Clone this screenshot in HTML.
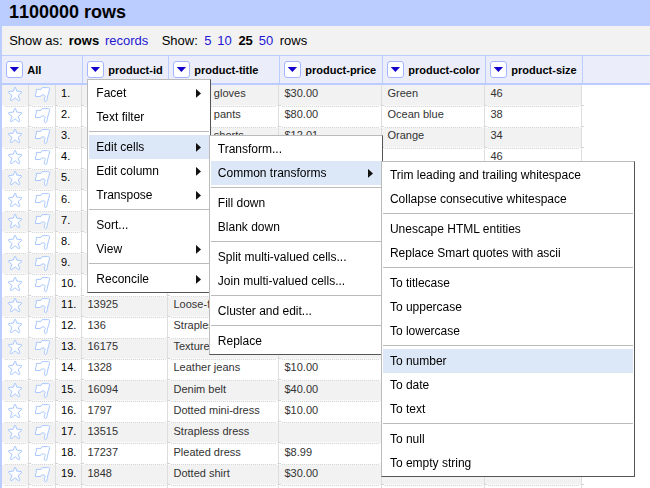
<!DOCTYPE html>
<html><head><meta charset="utf-8"><title>OpenRefine</title>
<style>
html,body{margin:0;padding:0}
body{width:650px;height:488px;overflow:hidden;background:#fff;position:relative;font-family:"Liberation Sans",Arial,sans-serif;color:#000}
.abs{position:absolute}
.t{position:absolute;white-space:nowrap;line-height:1}
.ic{position:absolute;overflow:visible}
a{color:#2416d2;text-decoration:none}
#top{left:0;top:0;width:650px;height:26px;background:#bbccff}
#bar{left:2px;top:26px;width:648px;height:29px;background:#f2f2f2}
#strip{left:0;top:0;width:2px;height:488px;background:#bbccff}
#hdr{left:2px;top:55px;width:648px;height:28px;background:#ebeefa;border-top:1px solid #bbccff;box-sizing:border-box}
#hdrb{left:2px;top:83px;width:648px;height:2px;background:#bbccff}
.hs{position:absolute;top:56px;width:1px;height:27px;background:#bbccff}
.btn{position:absolute;top:61px;width:17px;height:17px;box-sizing:border-box;background:#fff;border:1px solid #a4b5ff;border-radius:3px}
.btn:after{content:"";position:absolute;left:2.7px;top:4.9px;width:9.4px;height:5.2px;background:#1400cc;clip-path:polygon(0 0,100% 0,50% 100%)}
.hl{font-size:11px;font-weight:bold;top:65px}
.row{position:absolute;left:2px;width:580px}
.odd{background:#f2f2f2;box-shadow:0 1px 0 #f8f8f8}
.dot{position:absolute;left:2px;width:580px;height:0;border-top:1px dotted #d2d2d2}
.vs{position:absolute;top:85px;width:1px;height:403px;background:#ddd}
.c{font-size:11px;color:#333}
.n{font-size:11px;color:#000;font-kerning:none}
.menu{position:absolute;background:#fff;box-sizing:border-box;border:1px solid #bbb;border-right:1px solid #555;border-bottom:1px solid #555;font-size:12px;padding:1px 0;will-change:transform}
.mi{position:relative;height:24px;line-height:24px;padding-left:5.5px;white-space:nowrap;margin:0 1px}
.mi.sel{background:#dce7f7}
.mi.sub:after{content:"";position:absolute;right:8px;top:7.8px;width:5.2px;height:9.2px;background:#111;clip-path:polygon(0 0,100% 50%,0 100%)}
.ms{height:1px;background:#bbb;margin:2px 1px 3px 1px}
</style></head><body>
<div id="top" class="abs"></div>
<div id="bar" class="abs"></div>
<div id="hdr" class="abs"></div>
<div id="hdrb" class="abs"></div>
<div class="t" style="left:9px;top:3px;font-size:18px;font-weight:bold;font-kerning:none">1100000 rows</div>
<span class="t" style="left:9.2px;top:34px;font-size:13px">Show as:</span><span class="t" style="left:68.8px;top:34px;font-size:13px;font-weight:bold">rows</span><a class="t" style="left:105px;top:34px;font-size:13px">records</a><span class="t" style="left:161.7px;top:34px;font-size:13px">Show:</span><a class="t" style="left:204.3px;top:34px;font-size:13px">5</a><a class="t" style="left:217.2px;top:34px;font-size:13px">10</a><span class="t" style="left:238.4px;top:34px;font-size:13px;font-weight:bold">25</span><a class="t" style="left:258.7px;top:34px;font-size:13px">50</a><span class="t" style="left:279.7px;top:34px;font-size:13px">rows</span>
<div class="row odd" style="top:85px;height:20px"></div><div class="row odd" style="top:128px;height:19px"></div><div class="row odd" style="top:170px;height:19px"></div><div class="row odd" style="top:212px;height:19px"></div><div class="row odd" style="top:254px;height:19px"></div><div class="row odd" style="top:297px;height:19px"></div><div class="row odd" style="top:339px;height:19px"></div><div class="row odd" style="top:381px;height:19px"></div><div class="row odd" style="top:423px;height:19px"></div><div class="row odd" style="top:465px;height:19px"></div>
<svg class="ic" style="left:0;top:0" width="650" height="488"><path d="M4.8 106.5H26.5M31.8 106.5H53.5M58.8 106.5H79.5M84.8 106.5H165.5M170.8 106.5H276.5M281.8 106.5H379.5M384.8 106.5H482.5M487.8 106.5H579.5M4.8 127.5H26.5M31.8 127.5H53.5M58.8 127.5H79.5M84.8 127.5H165.5M170.8 127.5H276.5M281.8 127.5H379.5M384.8 127.5H482.5M487.8 127.5H579.5M4.8 148.5H26.5M31.8 148.5H53.5M58.8 148.5H79.5M84.8 148.5H165.5M170.8 148.5H276.5M281.8 148.5H379.5M384.8 148.5H482.5M487.8 148.5H579.5M4.8 169.5H26.5M31.8 169.5H53.5M58.8 169.5H79.5M84.8 169.5H165.5M170.8 169.5H276.5M281.8 169.5H379.5M384.8 169.5H482.5M487.8 169.5H579.5M4.8 190.5H26.5M31.8 190.5H53.5M58.8 190.5H79.5M84.8 190.5H165.5M170.8 190.5H276.5M281.8 190.5H379.5M384.8 190.5H482.5M487.8 190.5H579.5M4.8 211.5H26.5M31.8 211.5H53.5M58.8 211.5H79.5M84.8 211.5H165.5M170.8 211.5H276.5M281.8 211.5H379.5M384.8 211.5H482.5M487.8 211.5H579.5M4.8 232.5H26.5M31.8 232.5H53.5M58.8 232.5H79.5M84.8 232.5H165.5M170.8 232.5H276.5M281.8 232.5H379.5M384.8 232.5H482.5M487.8 232.5H579.5M4.8 253.5H26.5M31.8 253.5H53.5M58.8 253.5H79.5M84.8 253.5H165.5M170.8 253.5H276.5M281.8 253.5H379.5M384.8 253.5H482.5M487.8 253.5H579.5M4.8 274.5H26.5M31.8 274.5H53.5M58.8 274.5H79.5M84.8 274.5H165.5M170.8 274.5H276.5M281.8 274.5H379.5M384.8 274.5H482.5M487.8 274.5H579.5M4.8 296.5H26.5M31.8 296.5H53.5M58.8 296.5H79.5M84.8 296.5H165.5M170.8 296.5H276.5M281.8 296.5H379.5M384.8 296.5H482.5M487.8 296.5H579.5M4.8 317.5H26.5M31.8 317.5H53.5M58.8 317.5H79.5M84.8 317.5H165.5M170.8 317.5H276.5M281.8 317.5H379.5M384.8 317.5H482.5M487.8 317.5H579.5M4.8 338.5H26.5M31.8 338.5H53.5M58.8 338.5H79.5M84.8 338.5H165.5M170.8 338.5H276.5M281.8 338.5H379.5M384.8 338.5H482.5M487.8 338.5H579.5M4.8 359.5H26.5M31.8 359.5H53.5M58.8 359.5H79.5M84.8 359.5H165.5M170.8 359.5H276.5M281.8 359.5H379.5M384.8 359.5H482.5M487.8 359.5H579.5M4.8 380.5H26.5M31.8 380.5H53.5M58.8 380.5H79.5M84.8 380.5H165.5M170.8 380.5H276.5M281.8 380.5H379.5M384.8 380.5H482.5M487.8 380.5H579.5M4.8 401.5H26.5M31.8 401.5H53.5M58.8 401.5H79.5M84.8 401.5H165.5M170.8 401.5H276.5M281.8 401.5H379.5M384.8 401.5H482.5M487.8 401.5H579.5M4.8 422.5H26.5M31.8 422.5H53.5M58.8 422.5H79.5M84.8 422.5H165.5M170.8 422.5H276.5M281.8 422.5H379.5M384.8 422.5H482.5M487.8 422.5H579.5M4.8 443.5H26.5M31.8 443.5H53.5M58.8 443.5H79.5M84.8 443.5H165.5M170.8 443.5H276.5M281.8 443.5H379.5M384.8 443.5H482.5M487.8 443.5H579.5M4.8 464.5H26.5M31.8 464.5H53.5M58.8 464.5H79.5M84.8 464.5H165.5M170.8 464.5H276.5M281.8 464.5H379.5M384.8 464.5H482.5M487.8 464.5H579.5M4.8 485.5H26.5M31.8 485.5H53.5M58.8 485.5H79.5M84.8 485.5H165.5M170.8 485.5H276.5M281.8 485.5H379.5M384.8 485.5H482.5M487.8 485.5H579.5" stroke="#cecece" stroke-dasharray="1 1" fill="none"/><path d="M29 105.5h2M56 105.5h2M82 105.5h2M168 105.5h2M279 105.5h2M382 105.5h2M485 105.5h2M582 105.5h2M29 126.5h2M56 126.5h2M82 126.5h2M168 126.5h2M279 126.5h2M382 126.5h2M485 126.5h2M582 126.5h2M29 147.5h2M56 147.5h2M82 147.5h2M168 147.5h2M279 147.5h2M382 147.5h2M485 147.5h2M582 147.5h2M29 168.5h2M56 168.5h2M82 168.5h2M168 168.5h2M279 168.5h2M382 168.5h2M485 168.5h2M582 168.5h2M29 189.5h2M56 189.5h2M82 189.5h2M168 189.5h2M279 189.5h2M382 189.5h2M485 189.5h2M582 189.5h2M29 210.5h2M56 210.5h2M82 210.5h2M168 210.5h2M279 210.5h2M382 210.5h2M485 210.5h2M582 210.5h2M29 231.5h2M56 231.5h2M82 231.5h2M168 231.5h2M279 231.5h2M382 231.5h2M485 231.5h2M582 231.5h2M29 252.5h2M56 252.5h2M82 252.5h2M168 252.5h2M279 252.5h2M382 252.5h2M485 252.5h2M582 252.5h2M29 273.5h2M56 273.5h2M82 273.5h2M168 273.5h2M279 273.5h2M382 273.5h2M485 273.5h2M582 273.5h2M29 295.5h2M56 295.5h2M82 295.5h2M168 295.5h2M279 295.5h2M382 295.5h2M485 295.5h2M582 295.5h2M29 316.5h2M56 316.5h2M82 316.5h2M168 316.5h2M279 316.5h2M382 316.5h2M485 316.5h2M582 316.5h2M29 337.5h2M56 337.5h2M82 337.5h2M168 337.5h2M279 337.5h2M382 337.5h2M485 337.5h2M582 337.5h2M29 358.5h2M56 358.5h2M82 358.5h2M168 358.5h2M279 358.5h2M382 358.5h2M485 358.5h2M582 358.5h2M29 379.5h2M56 379.5h2M82 379.5h2M168 379.5h2M279 379.5h2M382 379.5h2M485 379.5h2M582 379.5h2M29 400.5h2M56 400.5h2M82 400.5h2M168 400.5h2M279 400.5h2M382 400.5h2M485 400.5h2M582 400.5h2M29 421.5h2M56 421.5h2M82 421.5h2M168 421.5h2M279 421.5h2M382 421.5h2M485 421.5h2M582 421.5h2M29 442.5h2M56 442.5h2M82 442.5h2M168 442.5h2M279 442.5h2M382 442.5h2M485 442.5h2M582 442.5h2M29 463.5h2M56 463.5h2M82 463.5h2M168 463.5h2M279 463.5h2M382 463.5h2M485 463.5h2M582 463.5h2M29 484.5h2M56 484.5h2M82 484.5h2M168 484.5h2M279 484.5h2M382 484.5h2M485 484.5h2M582 484.5h2" stroke="#d4d4d4" fill="none"/><path d="M27 105.5h1M54 105.5h1M80 105.5h1M166 105.5h1M277 105.5h1M380 105.5h1M483 105.5h1M580 105.5h1M27 126.5h1M54 126.5h1M80 126.5h1M166 126.5h1M277 126.5h1M380 126.5h1M483 126.5h1M580 126.5h1M27 147.5h1M54 147.5h1M80 147.5h1M166 147.5h1M277 147.5h1M380 147.5h1M483 147.5h1M580 147.5h1M27 168.5h1M54 168.5h1M80 168.5h1M166 168.5h1M277 168.5h1M380 168.5h1M483 168.5h1M580 168.5h1M27 189.5h1M54 189.5h1M80 189.5h1M166 189.5h1M277 189.5h1M380 189.5h1M483 189.5h1M580 189.5h1M27 210.5h1M54 210.5h1M80 210.5h1M166 210.5h1M277 210.5h1M380 210.5h1M483 210.5h1M580 210.5h1M27 231.5h1M54 231.5h1M80 231.5h1M166 231.5h1M277 231.5h1M380 231.5h1M483 231.5h1M580 231.5h1M27 252.5h1M54 252.5h1M80 252.5h1M166 252.5h1M277 252.5h1M380 252.5h1M483 252.5h1M580 252.5h1M27 273.5h1M54 273.5h1M80 273.5h1M166 273.5h1M277 273.5h1M380 273.5h1M483 273.5h1M580 273.5h1M27 295.5h1M54 295.5h1M80 295.5h1M166 295.5h1M277 295.5h1M380 295.5h1M483 295.5h1M580 295.5h1M27 316.5h1M54 316.5h1M80 316.5h1M166 316.5h1M277 316.5h1M380 316.5h1M483 316.5h1M580 316.5h1M27 337.5h1M54 337.5h1M80 337.5h1M166 337.5h1M277 337.5h1M380 337.5h1M483 337.5h1M580 337.5h1M27 358.5h1M54 358.5h1M80 358.5h1M166 358.5h1M277 358.5h1M380 358.5h1M483 358.5h1M580 358.5h1M27 379.5h1M54 379.5h1M80 379.5h1M166 379.5h1M277 379.5h1M380 379.5h1M483 379.5h1M580 379.5h1M27 400.5h1M54 400.5h1M80 400.5h1M166 400.5h1M277 400.5h1M380 400.5h1M483 400.5h1M580 400.5h1M27 421.5h1M54 421.5h1M80 421.5h1M166 421.5h1M277 421.5h1M380 421.5h1M483 421.5h1M580 421.5h1M27 442.5h1M54 442.5h1M80 442.5h1M166 442.5h1M277 442.5h1M380 442.5h1M483 442.5h1M580 442.5h1M27 463.5h1M54 463.5h1M80 463.5h1M166 463.5h1M277 463.5h1M380 463.5h1M483 463.5h1M580 463.5h1M27 484.5h1M54 484.5h1M80 484.5h1M166 484.5h1M277 484.5h1M380 484.5h1M483 484.5h1M580 484.5h1" stroke="#e8e8e8" fill="none"/></svg>
<div class="vs" style="left:28px"></div><div class="vs" style="left:55px"></div><div class="vs" style="left:81px"></div><div class="vs" style="left:167px"></div><div class="vs" style="left:278px"></div><div class="vs" style="left:381px"></div><div class="vs" style="left:484px"></div><div class="vs" style="left:581px"></div>
<svg class="ic" style="left:7px;top:86px" width="16" height="16" viewBox="0 0 16 16"><path d="M7.5 1.5 H8.6 L9.7 5.1 L14.3 5.5 L14.9 6.3 L11.1 9.5 L12.8 13.8 L12.2 14.7 L11.1 14.3 L8.05 11.8 L5 14.3 L3.9 14.7 L3.3 13.8 L5 9.5 L1.2 6.3 L1.8 5.5 L6.4 5.1 Z" fill="#fff" stroke="#a8c8ff" stroke-width="1" stroke-linejoin="round"/></svg><svg class="ic" style="left:34px;top:86px" width="18" height="17" viewBox="0 0 18 17"><path d="M2.3 3.4 H7 L8.2 1.6 H13.4 C14.8 1.4 15.9 2 15.7 2.8 C15 5 14.6 7.5 13.7 10.1 C13.4 11.8 13.1 13.6 12.6 14.9 C12.2 15.8 10.9 15.8 10.6 15 C10.2 14 10.3 12.4 10.9 11.3 C11.6 10.3 10.9 9.2 9.7 8.8 L7.2 9.3 L6.5 10.5 H1.5 V7.9 L2.3 6.8 Z" fill="#fff" stroke="#a8c8ff" stroke-width="1" stroke-linejoin="round"/></svg><span class="t n" style="left:61.1px;top:88px">1.</span><span class="t c" style="left:87.5px;top:88px">1004</span><span class="t c" style="left:173.5px;top:88px">Leather gloves</span><span class="t c" style="left:284.5px;top:88px">$30.00</span><span class="t c" style="left:387.5px;top:88px">Green</span><span class="t c" style="left:490.5px;top:88px">46</span>
<svg class="ic" style="left:7px;top:107px" width="16" height="16" viewBox="0 0 16 16"><path d="M7.5 1.5 H8.6 L9.7 5.1 L14.3 5.5 L14.9 6.3 L11.1 9.5 L12.8 13.8 L12.2 14.7 L11.1 14.3 L8.05 11.8 L5 14.3 L3.9 14.7 L3.3 13.8 L5 9.5 L1.2 6.3 L1.8 5.5 L6.4 5.1 Z" fill="#fff" stroke="#a8c8ff" stroke-width="1" stroke-linejoin="round"/></svg><svg class="ic" style="left:34px;top:107px" width="18" height="17" viewBox="0 0 18 17"><path d="M2.3 3.4 H7 L8.2 1.6 H13.4 C14.8 1.4 15.9 2 15.7 2.8 C15 5 14.6 7.5 13.7 10.1 C13.4 11.8 13.1 13.6 12.6 14.9 C12.2 15.8 10.9 15.8 10.6 15 C10.2 14 10.3 12.4 10.9 11.3 C11.6 10.3 10.9 9.2 9.7 8.8 L7.2 9.3 L6.5 10.5 H1.5 V7.9 L2.3 6.8 Z" fill="#fff" stroke="#a8c8ff" stroke-width="1" stroke-linejoin="round"/></svg><span class="t n" style="left:61.1px;top:109px">2.</span><span class="t c" style="left:87.5px;top:109px">1010</span><span class="t c" style="left:173.5px;top:109px">Leather pants</span><span class="t c" style="left:284.5px;top:109px">$80.00</span><span class="t c" style="left:387.5px;top:109px">Ocean blue</span><span class="t c" style="left:490.5px;top:109px">38</span>
<svg class="ic" style="left:7px;top:128px" width="16" height="16" viewBox="0 0 16 16"><path d="M7.5 1.5 H8.6 L9.7 5.1 L14.3 5.5 L14.9 6.3 L11.1 9.5 L12.8 13.8 L12.2 14.7 L11.1 14.3 L8.05 11.8 L5 14.3 L3.9 14.7 L3.3 13.8 L5 9.5 L1.2 6.3 L1.8 5.5 L6.4 5.1 Z" fill="#fff" stroke="#a8c8ff" stroke-width="1" stroke-linejoin="round"/></svg><svg class="ic" style="left:34px;top:128px" width="18" height="17" viewBox="0 0 18 17"><path d="M2.3 3.4 H7 L8.2 1.6 H13.4 C14.8 1.4 15.9 2 15.7 2.8 C15 5 14.6 7.5 13.7 10.1 C13.4 11.8 13.1 13.6 12.6 14.9 C12.2 15.8 10.9 15.8 10.6 15 C10.2 14 10.3 12.4 10.9 11.3 C11.6 10.3 10.9 9.2 9.7 8.8 L7.2 9.3 L6.5 10.5 H1.5 V7.9 L2.3 6.8 Z" fill="#fff" stroke="#a8c8ff" stroke-width="1" stroke-linejoin="round"/></svg><span class="t n" style="left:61.1px;top:130px">3.</span><span class="t c" style="left:87.5px;top:130px">1027</span><span class="t c" style="left:173.5px;top:130px">Leather shorts</span><span class="t c" style="left:284.5px;top:130px">$12.01</span><span class="t c" style="left:387.5px;top:130px">Orange</span><span class="t c" style="left:490.5px;top:130px">34</span>
<svg class="ic" style="left:7px;top:149px" width="16" height="16" viewBox="0 0 16 16"><path d="M7.5 1.5 H8.6 L9.7 5.1 L14.3 5.5 L14.9 6.3 L11.1 9.5 L12.8 13.8 L12.2 14.7 L11.1 14.3 L8.05 11.8 L5 14.3 L3.9 14.7 L3.3 13.8 L5 9.5 L1.2 6.3 L1.8 5.5 L6.4 5.1 Z" fill="#fff" stroke="#a8c8ff" stroke-width="1" stroke-linejoin="round"/></svg><svg class="ic" style="left:34px;top:149px" width="18" height="17" viewBox="0 0 18 17"><path d="M2.3 3.4 H7 L8.2 1.6 H13.4 C14.8 1.4 15.9 2 15.7 2.8 C15 5 14.6 7.5 13.7 10.1 C13.4 11.8 13.1 13.6 12.6 14.9 C12.2 15.8 10.9 15.8 10.6 15 C10.2 14 10.3 12.4 10.9 11.3 C11.6 10.3 10.9 9.2 9.7 8.8 L7.2 9.3 L6.5 10.5 H1.5 V7.9 L2.3 6.8 Z" fill="#fff" stroke="#a8c8ff" stroke-width="1" stroke-linejoin="round"/></svg><span class="t n" style="left:61.1px;top:151px">4.</span><span class="t c" style="left:87.5px;top:151px">1033</span><span class="t c" style="left:173.5px;top:151px">Leather skirt</span><span class="t c" style="left:284.5px;top:151px">$20.00</span><span class="t c" style="left:490.5px;top:151px">46</span>
<svg class="ic" style="left:7px;top:170px" width="16" height="16" viewBox="0 0 16 16"><path d="M7.5 1.5 H8.6 L9.7 5.1 L14.3 5.5 L14.9 6.3 L11.1 9.5 L12.8 13.8 L12.2 14.7 L11.1 14.3 L8.05 11.8 L5 14.3 L3.9 14.7 L3.3 13.8 L5 9.5 L1.2 6.3 L1.8 5.5 L6.4 5.1 Z" fill="#fff" stroke="#a8c8ff" stroke-width="1" stroke-linejoin="round"/></svg><svg class="ic" style="left:34px;top:170px" width="18" height="17" viewBox="0 0 18 17"><path d="M2.3 3.4 H7 L8.2 1.6 H13.4 C14.8 1.4 15.9 2 15.7 2.8 C15 5 14.6 7.5 13.7 10.1 C13.4 11.8 13.1 13.6 12.6 14.9 C12.2 15.8 10.9 15.8 10.6 15 C10.2 14 10.3 12.4 10.9 11.3 C11.6 10.3 10.9 9.2 9.7 8.8 L7.2 9.3 L6.5 10.5 H1.5 V7.9 L2.3 6.8 Z" fill="#fff" stroke="#a8c8ff" stroke-width="1" stroke-linejoin="round"/></svg><span class="t n" style="left:61.1px;top:172px">5.</span><span class="t c" style="left:87.5px;top:172px">1044</span><span class="t c" style="left:173.5px;top:172px">Cotton shirt</span><span class="t c" style="left:284.5px;top:172px">$15.00</span><span class="t c" style="left:387.5px;top:172px">Red</span><span class="t c" style="left:490.5px;top:172px">40</span>
<svg class="ic" style="left:7px;top:192px" width="16" height="16" viewBox="0 0 16 16"><path d="M7.5 1.5 H8.6 L9.7 5.1 L14.3 5.5 L14.9 6.3 L11.1 9.5 L12.8 13.8 L12.2 14.7 L11.1 14.3 L8.05 11.8 L5 14.3 L3.9 14.7 L3.3 13.8 L5 9.5 L1.2 6.3 L1.8 5.5 L6.4 5.1 Z" fill="#fff" stroke="#a8c8ff" stroke-width="1" stroke-linejoin="round"/></svg><svg class="ic" style="left:34px;top:192px" width="18" height="17" viewBox="0 0 18 17"><path d="M2.3 3.4 H7 L8.2 1.6 H13.4 C14.8 1.4 15.9 2 15.7 2.8 C15 5 14.6 7.5 13.7 10.1 C13.4 11.8 13.1 13.6 12.6 14.9 C12.2 15.8 10.9 15.8 10.6 15 C10.2 14 10.3 12.4 10.9 11.3 C11.6 10.3 10.9 9.2 9.7 8.8 L7.2 9.3 L6.5 10.5 H1.5 V7.9 L2.3 6.8 Z" fill="#fff" stroke="#a8c8ff" stroke-width="1" stroke-linejoin="round"/></svg><span class="t n" style="left:61.1px;top:194px">6.</span><span class="t c" style="left:87.5px;top:194px">1052</span><span class="t c" style="left:173.5px;top:194px">Cotton dress</span><span class="t c" style="left:284.5px;top:194px">$25.00</span><span class="t c" style="left:387.5px;top:194px">Blue</span><span class="t c" style="left:490.5px;top:194px">36</span>
<svg class="ic" style="left:7px;top:213px" width="16" height="16" viewBox="0 0 16 16"><path d="M7.5 1.5 H8.6 L9.7 5.1 L14.3 5.5 L14.9 6.3 L11.1 9.5 L12.8 13.8 L12.2 14.7 L11.1 14.3 L8.05 11.8 L5 14.3 L3.9 14.7 L3.3 13.8 L5 9.5 L1.2 6.3 L1.8 5.5 L6.4 5.1 Z" fill="#fff" stroke="#a8c8ff" stroke-width="1" stroke-linejoin="round"/></svg><svg class="ic" style="left:34px;top:213px" width="18" height="17" viewBox="0 0 18 17"><path d="M2.3 3.4 H7 L8.2 1.6 H13.4 C14.8 1.4 15.9 2 15.7 2.8 C15 5 14.6 7.5 13.7 10.1 C13.4 11.8 13.1 13.6 12.6 14.9 C12.2 15.8 10.9 15.8 10.6 15 C10.2 14 10.3 12.4 10.9 11.3 C11.6 10.3 10.9 9.2 9.7 8.8 L7.2 9.3 L6.5 10.5 H1.5 V7.9 L2.3 6.8 Z" fill="#fff" stroke="#a8c8ff" stroke-width="1" stroke-linejoin="round"/></svg><span class="t n" style="left:61.1px;top:215px">7.</span><span class="t c" style="left:87.5px;top:215px">1068</span><span class="t c" style="left:173.5px;top:215px">Wool scarf</span><span class="t c" style="left:284.5px;top:215px">$9.00</span><span class="t c" style="left:387.5px;top:215px">Grey</span><span class="t c" style="left:490.5px;top:215px">42</span>
<svg class="ic" style="left:7px;top:234px" width="16" height="16" viewBox="0 0 16 16"><path d="M7.5 1.5 H8.6 L9.7 5.1 L14.3 5.5 L14.9 6.3 L11.1 9.5 L12.8 13.8 L12.2 14.7 L11.1 14.3 L8.05 11.8 L5 14.3 L3.9 14.7 L3.3 13.8 L5 9.5 L1.2 6.3 L1.8 5.5 L6.4 5.1 Z" fill="#fff" stroke="#a8c8ff" stroke-width="1" stroke-linejoin="round"/></svg><svg class="ic" style="left:34px;top:234px" width="18" height="17" viewBox="0 0 18 17"><path d="M2.3 3.4 H7 L8.2 1.6 H13.4 C14.8 1.4 15.9 2 15.7 2.8 C15 5 14.6 7.5 13.7 10.1 C13.4 11.8 13.1 13.6 12.6 14.9 C12.2 15.8 10.9 15.8 10.6 15 C10.2 14 10.3 12.4 10.9 11.3 C11.6 10.3 10.9 9.2 9.7 8.8 L7.2 9.3 L6.5 10.5 H1.5 V7.9 L2.3 6.8 Z" fill="#fff" stroke="#a8c8ff" stroke-width="1" stroke-linejoin="round"/></svg><span class="t n" style="left:61.1px;top:236px">8.</span><span class="t c" style="left:87.5px;top:236px">1071</span><span class="t c" style="left:173.5px;top:236px">Wool hat</span><span class="t c" style="left:284.5px;top:236px">$7.50</span><span class="t c" style="left:387.5px;top:236px">Black</span><span class="t c" style="left:490.5px;top:236px">44</span>
<svg class="ic" style="left:7px;top:255px" width="16" height="16" viewBox="0 0 16 16"><path d="M7.5 1.5 H8.6 L9.7 5.1 L14.3 5.5 L14.9 6.3 L11.1 9.5 L12.8 13.8 L12.2 14.7 L11.1 14.3 L8.05 11.8 L5 14.3 L3.9 14.7 L3.3 13.8 L5 9.5 L1.2 6.3 L1.8 5.5 L6.4 5.1 Z" fill="#fff" stroke="#a8c8ff" stroke-width="1" stroke-linejoin="round"/></svg><svg class="ic" style="left:34px;top:255px" width="18" height="17" viewBox="0 0 18 17"><path d="M2.3 3.4 H7 L8.2 1.6 H13.4 C14.8 1.4 15.9 2 15.7 2.8 C15 5 14.6 7.5 13.7 10.1 C13.4 11.8 13.1 13.6 12.6 14.9 C12.2 15.8 10.9 15.8 10.6 15 C10.2 14 10.3 12.4 10.9 11.3 C11.6 10.3 10.9 9.2 9.7 8.8 L7.2 9.3 L6.5 10.5 H1.5 V7.9 L2.3 6.8 Z" fill="#fff" stroke="#a8c8ff" stroke-width="1" stroke-linejoin="round"/></svg><span class="t n" style="left:61.1px;top:257px">9.</span><span class="t c" style="left:87.5px;top:257px">1085</span><span class="t c" style="left:173.5px;top:257px">Silk blouse</span><span class="t c" style="left:284.5px;top:257px">$45.00</span><span class="t c" style="left:387.5px;top:257px">White</span><span class="t c" style="left:490.5px;top:257px">38</span>
<svg class="ic" style="left:7px;top:276px" width="16" height="16" viewBox="0 0 16 16"><path d="M7.5 1.5 H8.6 L9.7 5.1 L14.3 5.5 L14.9 6.3 L11.1 9.5 L12.8 13.8 L12.2 14.7 L11.1 14.3 L8.05 11.8 L5 14.3 L3.9 14.7 L3.3 13.8 L5 9.5 L1.2 6.3 L1.8 5.5 L6.4 5.1 Z" fill="#fff" stroke="#a8c8ff" stroke-width="1" stroke-linejoin="round"/></svg><svg class="ic" style="left:34px;top:276px" width="18" height="17" viewBox="0 0 18 17"><path d="M2.3 3.4 H7 L8.2 1.6 H13.4 C14.8 1.4 15.9 2 15.7 2.8 C15 5 14.6 7.5 13.7 10.1 C13.4 11.8 13.1 13.6 12.6 14.9 C12.2 15.8 10.9 15.8 10.6 15 C10.2 14 10.3 12.4 10.9 11.3 C11.6 10.3 10.9 9.2 9.7 8.8 L7.2 9.3 L6.5 10.5 H1.5 V7.9 L2.3 6.8 Z" fill="#fff" stroke="#a8c8ff" stroke-width="1" stroke-linejoin="round"/></svg><span class="t n" style="left:61.1px;top:278px">10.</span><span class="t c" style="left:87.5px;top:278px">1093</span><span class="t c" style="left:173.5px;top:278px">Silk tie</span><span class="t c" style="left:284.5px;top:278px">$18.00</span><span class="t c" style="left:387.5px;top:278px">Navy</span><span class="t c" style="left:490.5px;top:278px">40</span>
<svg class="ic" style="left:7px;top:297px" width="16" height="16" viewBox="0 0 16 16"><path d="M7.5 1.5 H8.6 L9.7 5.1 L14.3 5.5 L14.9 6.3 L11.1 9.5 L12.8 13.8 L12.2 14.7 L11.1 14.3 L8.05 11.8 L5 14.3 L3.9 14.7 L3.3 13.8 L5 9.5 L1.2 6.3 L1.8 5.5 L6.4 5.1 Z" fill="#fff" stroke="#a8c8ff" stroke-width="1" stroke-linejoin="round"/></svg><svg class="ic" style="left:34px;top:297px" width="18" height="17" viewBox="0 0 18 17"><path d="M2.3 3.4 H7 L8.2 1.6 H13.4 C14.8 1.4 15.9 2 15.7 2.8 C15 5 14.6 7.5 13.7 10.1 C13.4 11.8 13.1 13.6 12.6 14.9 C12.2 15.8 10.9 15.8 10.6 15 C10.2 14 10.3 12.4 10.9 11.3 C11.6 10.3 10.9 9.2 9.7 8.8 L7.2 9.3 L6.5 10.5 H1.5 V7.9 L2.3 6.8 Z" fill="#fff" stroke="#a8c8ff" stroke-width="1" stroke-linejoin="round"/></svg><span class="t n" style="left:61.1px;top:299px">11.</span><span class="t c" style="left:87.5px;top:299px">13925</span><span class="t c" style="left:173.5px;top:299px">Loose-fit pants</span><span class="t c" style="left:284.5px;top:299px">$22.00</span><span class="t c" style="left:387.5px;top:299px">Pink</span><span class="t c" style="left:490.5px;top:299px">36</span>
<svg class="ic" style="left:7px;top:318px" width="16" height="16" viewBox="0 0 16 16"><path d="M7.5 1.5 H8.6 L9.7 5.1 L14.3 5.5 L14.9 6.3 L11.1 9.5 L12.8 13.8 L12.2 14.7 L11.1 14.3 L8.05 11.8 L5 14.3 L3.9 14.7 L3.3 13.8 L5 9.5 L1.2 6.3 L1.8 5.5 L6.4 5.1 Z" fill="#fff" stroke="#a8c8ff" stroke-width="1" stroke-linejoin="round"/></svg><svg class="ic" style="left:34px;top:318px" width="18" height="17" viewBox="0 0 18 17"><path d="M2.3 3.4 H7 L8.2 1.6 H13.4 C14.8 1.4 15.9 2 15.7 2.8 C15 5 14.6 7.5 13.7 10.1 C13.4 11.8 13.1 13.6 12.6 14.9 C12.2 15.8 10.9 15.8 10.6 15 C10.2 14 10.3 12.4 10.9 11.3 C11.6 10.3 10.9 9.2 9.7 8.8 L7.2 9.3 L6.5 10.5 H1.5 V7.9 L2.3 6.8 Z" fill="#fff" stroke="#a8c8ff" stroke-width="1" stroke-linejoin="round"/></svg><span class="t n" style="left:61.1px;top:320px">12.</span><span class="t c" style="left:87.5px;top:320px">136</span><span class="t c" style="left:173.5px;top:320px">Strapless dress</span><span class="t c" style="left:284.5px;top:320px">$35.00</span><span class="t c" style="left:387.5px;top:320px">Yellow</span><span class="t c" style="left:490.5px;top:320px">38</span>
<svg class="ic" style="left:7px;top:339px" width="16" height="16" viewBox="0 0 16 16"><path d="M7.5 1.5 H8.6 L9.7 5.1 L14.3 5.5 L14.9 6.3 L11.1 9.5 L12.8 13.8 L12.2 14.7 L11.1 14.3 L8.05 11.8 L5 14.3 L3.9 14.7 L3.3 13.8 L5 9.5 L1.2 6.3 L1.8 5.5 L6.4 5.1 Z" fill="#fff" stroke="#a8c8ff" stroke-width="1" stroke-linejoin="round"/></svg><svg class="ic" style="left:34px;top:339px" width="18" height="17" viewBox="0 0 18 17"><path d="M2.3 3.4 H7 L8.2 1.6 H13.4 C14.8 1.4 15.9 2 15.7 2.8 C15 5 14.6 7.5 13.7 10.1 C13.4 11.8 13.1 13.6 12.6 14.9 C12.2 15.8 10.9 15.8 10.6 15 C10.2 14 10.3 12.4 10.9 11.3 C11.6 10.3 10.9 9.2 9.7 8.8 L7.2 9.3 L6.5 10.5 H1.5 V7.9 L2.3 6.8 Z" fill="#fff" stroke="#a8c8ff" stroke-width="1" stroke-linejoin="round"/></svg><span class="t n" style="left:61.1px;top:341px">13.</span><span class="t c" style="left:87.5px;top:341px">16175</span><span class="t c" style="left:173.5px;top:341px">Textured shirt</span><span class="t c" style="left:284.5px;top:341px">$28.00</span><span class="t c" style="left:387.5px;top:341px">Brown</span><span class="t c" style="left:490.5px;top:341px">42</span>
<svg class="ic" style="left:7px;top:360px" width="16" height="16" viewBox="0 0 16 16"><path d="M7.5 1.5 H8.6 L9.7 5.1 L14.3 5.5 L14.9 6.3 L11.1 9.5 L12.8 13.8 L12.2 14.7 L11.1 14.3 L8.05 11.8 L5 14.3 L3.9 14.7 L3.3 13.8 L5 9.5 L1.2 6.3 L1.8 5.5 L6.4 5.1 Z" fill="#fff" stroke="#a8c8ff" stroke-width="1" stroke-linejoin="round"/></svg><svg class="ic" style="left:34px;top:360px" width="18" height="17" viewBox="0 0 18 17"><path d="M2.3 3.4 H7 L8.2 1.6 H13.4 C14.8 1.4 15.9 2 15.7 2.8 C15 5 14.6 7.5 13.7 10.1 C13.4 11.8 13.1 13.6 12.6 14.9 C12.2 15.8 10.9 15.8 10.6 15 C10.2 14 10.3 12.4 10.9 11.3 C11.6 10.3 10.9 9.2 9.7 8.8 L7.2 9.3 L6.5 10.5 H1.5 V7.9 L2.3 6.8 Z" fill="#fff" stroke="#a8c8ff" stroke-width="1" stroke-linejoin="round"/></svg><span class="t n" style="left:61.1px;top:362px">14.</span><span class="t c" style="left:87.5px;top:362px">1328</span><span class="t c" style="left:173.5px;top:362px">Leather jeans</span><span class="t c" style="left:284.5px;top:362px">$10.00</span><span class="t c" style="left:387.5px;top:362px">Black</span><span class="t c" style="left:490.5px;top:362px">40</span>
<svg class="ic" style="left:7px;top:382px" width="16" height="16" viewBox="0 0 16 16"><path d="M7.5 1.5 H8.6 L9.7 5.1 L14.3 5.5 L14.9 6.3 L11.1 9.5 L12.8 13.8 L12.2 14.7 L11.1 14.3 L8.05 11.8 L5 14.3 L3.9 14.7 L3.3 13.8 L5 9.5 L1.2 6.3 L1.8 5.5 L6.4 5.1 Z" fill="#fff" stroke="#a8c8ff" stroke-width="1" stroke-linejoin="round"/></svg><svg class="ic" style="left:34px;top:382px" width="18" height="17" viewBox="0 0 18 17"><path d="M2.3 3.4 H7 L8.2 1.6 H13.4 C14.8 1.4 15.9 2 15.7 2.8 C15 5 14.6 7.5 13.7 10.1 C13.4 11.8 13.1 13.6 12.6 14.9 C12.2 15.8 10.9 15.8 10.6 15 C10.2 14 10.3 12.4 10.9 11.3 C11.6 10.3 10.9 9.2 9.7 8.8 L7.2 9.3 L6.5 10.5 H1.5 V7.9 L2.3 6.8 Z" fill="#fff" stroke="#a8c8ff" stroke-width="1" stroke-linejoin="round"/></svg><span class="t n" style="left:61.1px;top:384px">15.</span><span class="t c" style="left:87.5px;top:384px">16094</span><span class="t c" style="left:173.5px;top:384px">Denim belt</span><span class="t c" style="left:284.5px;top:384px">$40.00</span><span class="t c" style="left:387.5px;top:384px">Blue</span><span class="t c" style="left:490.5px;top:384px">44</span>
<svg class="ic" style="left:7px;top:403px" width="16" height="16" viewBox="0 0 16 16"><path d="M7.5 1.5 H8.6 L9.7 5.1 L14.3 5.5 L14.9 6.3 L11.1 9.5 L12.8 13.8 L12.2 14.7 L11.1 14.3 L8.05 11.8 L5 14.3 L3.9 14.7 L3.3 13.8 L5 9.5 L1.2 6.3 L1.8 5.5 L6.4 5.1 Z" fill="#fff" stroke="#a8c8ff" stroke-width="1" stroke-linejoin="round"/></svg><svg class="ic" style="left:34px;top:403px" width="18" height="17" viewBox="0 0 18 17"><path d="M2.3 3.4 H7 L8.2 1.6 H13.4 C14.8 1.4 15.9 2 15.7 2.8 C15 5 14.6 7.5 13.7 10.1 C13.4 11.8 13.1 13.6 12.6 14.9 C12.2 15.8 10.9 15.8 10.6 15 C10.2 14 10.3 12.4 10.9 11.3 C11.6 10.3 10.9 9.2 9.7 8.8 L7.2 9.3 L6.5 10.5 H1.5 V7.9 L2.3 6.8 Z" fill="#fff" stroke="#a8c8ff" stroke-width="1" stroke-linejoin="round"/></svg><span class="t n" style="left:61.1px;top:405px">16.</span><span class="t c" style="left:87.5px;top:405px">1797</span><span class="t c" style="left:173.5px;top:405px">Dotted mini-dress</span><span class="t c" style="left:284.5px;top:405px">$10.00</span><span class="t c" style="left:387.5px;top:405px">Red</span><span class="t c" style="left:490.5px;top:405px">36</span>
<svg class="ic" style="left:7px;top:424px" width="16" height="16" viewBox="0 0 16 16"><path d="M7.5 1.5 H8.6 L9.7 5.1 L14.3 5.5 L14.9 6.3 L11.1 9.5 L12.8 13.8 L12.2 14.7 L11.1 14.3 L8.05 11.8 L5 14.3 L3.9 14.7 L3.3 13.8 L5 9.5 L1.2 6.3 L1.8 5.5 L6.4 5.1 Z" fill="#fff" stroke="#a8c8ff" stroke-width="1" stroke-linejoin="round"/></svg><svg class="ic" style="left:34px;top:424px" width="18" height="17" viewBox="0 0 18 17"><path d="M2.3 3.4 H7 L8.2 1.6 H13.4 C14.8 1.4 15.9 2 15.7 2.8 C15 5 14.6 7.5 13.7 10.1 C13.4 11.8 13.1 13.6 12.6 14.9 C12.2 15.8 10.9 15.8 10.6 15 C10.2 14 10.3 12.4 10.9 11.3 C11.6 10.3 10.9 9.2 9.7 8.8 L7.2 9.3 L6.5 10.5 H1.5 V7.9 L2.3 6.8 Z" fill="#fff" stroke="#a8c8ff" stroke-width="1" stroke-linejoin="round"/></svg><span class="t n" style="left:61.1px;top:426px">17.</span><span class="t c" style="left:87.5px;top:426px">13515</span><span class="t c" style="left:173.5px;top:426px">Strapless dress</span><span class="t c" style="left:387.5px;top:426px">Green</span><span class="t c" style="left:490.5px;top:426px">38</span>
<svg class="ic" style="left:7px;top:445px" width="16" height="16" viewBox="0 0 16 16"><path d="M7.5 1.5 H8.6 L9.7 5.1 L14.3 5.5 L14.9 6.3 L11.1 9.5 L12.8 13.8 L12.2 14.7 L11.1 14.3 L8.05 11.8 L5 14.3 L3.9 14.7 L3.3 13.8 L5 9.5 L1.2 6.3 L1.8 5.5 L6.4 5.1 Z" fill="#fff" stroke="#a8c8ff" stroke-width="1" stroke-linejoin="round"/></svg><svg class="ic" style="left:34px;top:445px" width="18" height="17" viewBox="0 0 18 17"><path d="M2.3 3.4 H7 L8.2 1.6 H13.4 C14.8 1.4 15.9 2 15.7 2.8 C15 5 14.6 7.5 13.7 10.1 C13.4 11.8 13.1 13.6 12.6 14.9 C12.2 15.8 10.9 15.8 10.6 15 C10.2 14 10.3 12.4 10.9 11.3 C11.6 10.3 10.9 9.2 9.7 8.8 L7.2 9.3 L6.5 10.5 H1.5 V7.9 L2.3 6.8 Z" fill="#fff" stroke="#a8c8ff" stroke-width="1" stroke-linejoin="round"/></svg><span class="t n" style="left:61.1px;top:447px">18.</span><span class="t c" style="left:87.5px;top:447px">17237</span><span class="t c" style="left:173.5px;top:447px">Pleated dress</span><span class="t c" style="left:284.5px;top:447px">$8.99</span><span class="t c" style="left:387.5px;top:447px">White</span><span class="t c" style="left:490.5px;top:447px">40</span>
<svg class="ic" style="left:7px;top:466px" width="16" height="16" viewBox="0 0 16 16"><path d="M7.5 1.5 H8.6 L9.7 5.1 L14.3 5.5 L14.9 6.3 L11.1 9.5 L12.8 13.8 L12.2 14.7 L11.1 14.3 L8.05 11.8 L5 14.3 L3.9 14.7 L3.3 13.8 L5 9.5 L1.2 6.3 L1.8 5.5 L6.4 5.1 Z" fill="#fff" stroke="#a8c8ff" stroke-width="1" stroke-linejoin="round"/></svg><svg class="ic" style="left:34px;top:466px" width="18" height="17" viewBox="0 0 18 17"><path d="M2.3 3.4 H7 L8.2 1.6 H13.4 C14.8 1.4 15.9 2 15.7 2.8 C15 5 14.6 7.5 13.7 10.1 C13.4 11.8 13.1 13.6 12.6 14.9 C12.2 15.8 10.9 15.8 10.6 15 C10.2 14 10.3 12.4 10.9 11.3 C11.6 10.3 10.9 9.2 9.7 8.8 L7.2 9.3 L6.5 10.5 H1.5 V7.9 L2.3 6.8 Z" fill="#fff" stroke="#a8c8ff" stroke-width="1" stroke-linejoin="round"/></svg><span class="t n" style="left:61.1px;top:468px">19.</span><span class="t c" style="left:87.5px;top:468px">1848</span><span class="t c" style="left:173.5px;top:468px">Dotted shirt</span><span class="t c" style="left:284.5px;top:468px">$30.00</span>
<svg class="ic" style="left:7px;top:487px" width="16" height="16" viewBox="0 0 16 16"><path d="M7.5 1.5 H8.6 L9.7 5.1 L14.3 5.5 L14.9 6.3 L11.1 9.5 L12.8 13.8 L12.2 14.7 L11.1 14.3 L8.05 11.8 L5 14.3 L3.9 14.7 L3.3 13.8 L5 9.5 L1.2 6.3 L1.8 5.5 L6.4 5.1 Z" fill="#fff" stroke="#a8c8ff" stroke-width="1" stroke-linejoin="round"/></svg><svg class="ic" style="left:34px;top:487px" width="18" height="17" viewBox="0 0 18 17"><path d="M2.3 3.4 H7 L8.2 1.6 H13.4 C14.8 1.4 15.9 2 15.7 2.8 C15 5 14.6 7.5 13.7 10.1 C13.4 11.8 13.1 13.6 12.6 14.9 C12.2 15.8 10.9 15.8 10.6 15 C10.2 14 10.3 12.4 10.9 11.3 C11.6 10.3 10.9 9.2 9.7 8.8 L7.2 9.3 L6.5 10.5 H1.5 V7.9 L2.3 6.8 Z" fill="#fff" stroke="#a8c8ff" stroke-width="1" stroke-linejoin="round"/></svg><span class="t n" style="left:61.1px;top:489px">20.</span><span class="t c" style="left:87.5px;top:489px">1901</span><span class="t c" style="left:173.5px;top:489px">Plain shirt</span><span class="t c" style="left:284.5px;top:489px">$12.00</span><span class="t c" style="left:387.5px;top:489px">Blue</span><span class="t c" style="left:490.5px;top:489px">44</span>
<div class="hs" style="left:82px"></div><div class="hs" style="left:168px"></div><div class="hs" style="left:279px"></div><div class="hs" style="left:382px"></div><div class="hs" style="left:485px"></div><div class="hs" style="left:582px"></div><div class="btn" style="left:6px"></div><span class="t hl" style="left:27.3px">All</span><div class="btn" style="left:87px"></div><span class="t hl" style="left:108.3px">product-id</span><div class="btn" style="left:173px"></div><span class="t hl" style="left:194.3px">product-title</span><div class="btn" style="left:284px"></div><span class="t hl" style="left:305.3px">product-price</span><div class="btn" style="left:387px"></div><span class="t hl" style="left:408.3px">product-color</span><div class="btn" style="left:490px"></div><span class="t hl" style="left:511.3px">product-size</span>
<div id="strip" class="abs"></div>
<div class="menu" style="left:87px;top:79px;width:124px"><div class="mi sub" style="padding-left:7.3px">Facet</div><div class="mi" style="padding-left:7.3px">Text filter</div><div class="ms"></div><div class="mi sub sel" style="padding-left:7.3px">Edit cells</div><div class="mi sub" style="padding-left:7.3px">Edit column</div><div class="mi sub" style="padding-left:7.3px">Transpose</div><div class="ms"></div><div class="mi" style="padding-left:7.3px">Sort...</div><div class="mi sub" style="padding-left:7.3px">View</div><div class="ms"></div><div class="mi sub" style="padding-left:7.3px">Reconcile</div></div>
<div class="menu" style="left:209px;top:135px;width:174px"><div class="mi" style="padding-left:6.8px">Transform...</div><div class="mi sub sel" style="padding-left:6.8px">Common transforms</div><div class="ms"></div><div class="mi" style="padding-left:6.8px">Fill down</div><div class="mi" style="padding-left:6.8px">Blank down</div><div class="ms"></div><div class="mi" style="padding-left:6.8px">Split multi-valued cells...</div><div class="mi" style="padding-left:6.8px">Join multi-valued cells...</div><div class="ms"></div><div class="mi" style="padding-left:6.8px">Cluster and edit...</div><div class="ms"></div><div class="mi" style="padding-left:6.8px">Replace</div></div>
<div class="menu" style="left:381px;top:161px;width:254px"><div class="mi" style="padding-left:6.9px">Trim leading and trailing whitespace</div><div class="mi" style="padding-left:6.9px">Collapse consecutive whitespace</div><div class="ms"></div><div class="mi" style="padding-left:6.9px">Unescape HTML entities</div><div class="mi" style="padding-left:6.9px">Replace Smart quotes with ascii</div><div class="ms"></div><div class="mi" style="padding-left:6.9px">To titlecase</div><div class="mi" style="padding-left:6.9px">To uppercase</div><div class="mi" style="padding-left:6.9px">To lowercase</div><div class="ms"></div><div class="mi sel" style="padding-left:6.9px">To number</div><div class="mi" style="padding-left:6.9px">To date</div><div class="mi" style="padding-left:6.9px">To text</div><div class="ms"></div><div class="mi" style="padding-left:6.9px">To null</div><div class="mi" style="padding-left:6.9px">To empty string</div></div>
</body></html>
